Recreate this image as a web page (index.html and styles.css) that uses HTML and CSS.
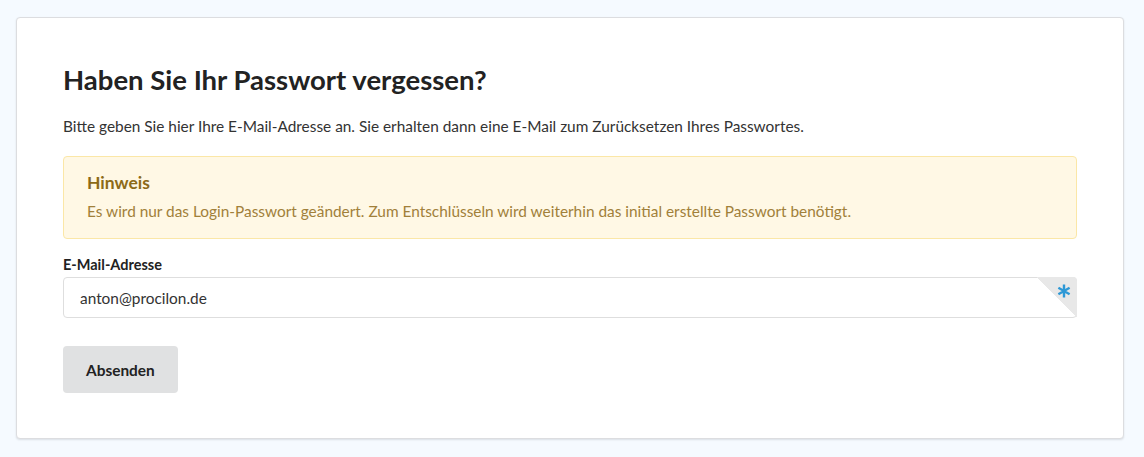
FILE: index.html
```html
<!DOCTYPE html>
<html lang="de">
<head>
    <meta charset="UTF-8">
    <meta name="viewport" content="width=device-width, initial-scale=1.0">
    <title>Passwort vergessen</title>
    <link rel="stylesheet" href="styles.css">
</head>
<body>
    <div class="card">
        <h1>Haben Sie Ihr Passwort vergessen?</h1>
        <p class="intro">Bitte geben Sie hier Ihre E-Mail-Adresse an. Sie erhalten dann eine E-Mail zum Zurücksetzen Ihres Passwortes.</p>

        <div class="notice">
            <div class="notice-title">Hinweis</div>
            <p>Es wird nur das Login-Passwort geändert. Zum Entschlüsseln wird weiterhin das initial erstellte Passwort benötigt.</p>
        </div>

        <form class="reset-form">
            <div class="field">
                <label for="email">E-Mail-Adresse</label>
                <div class="input-wrap">
                    <input type="email" id="email" name="email" value="anton@procilon.de" required>
                    <span class="corner">
                        <svg class="asterisk" viewBox="0 0 14 14" width="14" height="14">
                            <path d="M7 0.5 V13.5 M1.4 3.8 L12.6 10.2 M1.4 10.2 L12.6 3.8" stroke="#2d98d6" stroke-width="2.4" fill="none"/>
                        </svg>
                    </span>
                </div>
            </div>
            <button type="submit">Absenden</button>
        </form>
    </div>
</body>
</html>
```

FILE: styles.css
```css
body {
    margin: 0;
    padding: 17px 20px 18px 16px;
    background: #f5faff;
    font-family: Lato, "Open Sans", sans-serif;
    font-size: 15.4px;
    color: #333;
}
.card {
    background: #fff;
    border: 1px solid #dcdde0;
    border-radius: 4px;
    box-shadow: 0 1px 2px rgba(34, 36, 38, 0.12);
    padding: 44px 46px 45px 46px;
}
h1 {
    margin: 0 0 17px 0;
    font-size: 27.5px;
    line-height: 36px;
    font-weight: 700;
    color: #222;
}
.intro {
    margin: 0 0 19px 0;
    line-height: 22px;
}
.notice {
    background: #fff8e5;
    border: 1px solid #fbe7a7;
    border-radius: 4px;
    padding: 15px 23px 16px 23px;
    color: #a1803a;
    margin-bottom: 17px;
}
.notice-title {
    font-weight: 700;
    font-size: 17.5px;
    line-height: 21px;
    color: #8c6a18;
    margin-bottom: 7px;
}
.notice p {
    margin: 0;
    line-height: 22px;
}
.field {
    margin-bottom: 28px;
}
label {
    display: block;
    font-size: 14.5px;
    font-weight: 700;
    color: #222;
    line-height: 18px;
    margin-bottom: 3px;
}
.input-wrap {
    position: relative;
}
input {
    display: block;
    width: 100%;
    box-sizing: border-box;
    height: 41px;
    padding: 0 16px;
    border: 1px solid #dedede;
    border-radius: 4px;
    font-family: inherit;
    font-size: 15.4px;
    color: #333;
    outline: none;
}
.corner {
    position: absolute;
    top: 0;
    right: 0;
    width: 40px;
    height: 41px;
    border-top-right-radius: 4px;
    overflow: hidden;
    background: linear-gradient(to bottom left, #e8e8e8 50%, transparent 50%);
}
.asterisk {
    position: absolute;
    top: 7px;
    right: 6px;
}
button {
    height: 47px;
    padding: 0 23px;
    background: #e0e1e2;
    color: #222;
    border: none;
    border-radius: 4px;
    font-family: inherit;
    font-size: 15.4px;
    font-weight: 700;
    cursor: pointer;
}
```
